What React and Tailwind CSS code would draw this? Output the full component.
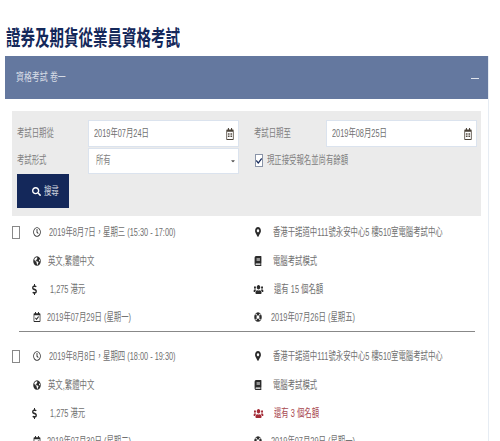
import { FaRegClock, FaGlobeAmericas, FaDollarSign, FaRegCalendarCheck, FaMapMarkerAlt, FaBook, FaUsers, FaLifeRing, FaSearch, FaRegCalendarAlt, FaCheck, FaCaretDown } from 'react-icons/fa';

const font = { fontFamily: '"Liberation Sans", "Noto Sans CJK TC", sans-serif' };

const sessions = [
  {
    date: '2019年8月7日，星期三 (15:30 - 17:00)',
    place: '香港干諾道中111號永安中心5 樓510室電腦考試中心',
    seats: '還有 15 個名額',
    low: false,
    closeDate: '2019年07月29日 (星期一)',
    resultDate: '2019年07月26日 (星期五)',
  },
  {
    date: '2019年8月8日，星期四 (18:00 - 19:30)',
    place: '香港干諾道中111號永安中心5 樓510室電腦考試中心',
    seats: '還有 3 個名額',
    low: true,
    closeDate: '2019年07月30日 (星期二)',
    resultDate: '2019年07月29日 (星期一)',
  },
];

// the reference is squeezed horizontally, so text is narrowed the same way
function Narrow({ children, className = '' }) {
  return <span className={`inline-block origin-left scale-x-[0.67] whitespace-nowrap ${className}`}>{children}</span>;
}

function Cell({ icon, children, gap = 'ml-[5px]', iconColor = 'text-[#2b2b2b]', className = '', first }) {
  return (
    <div className={`flex items-center ${first ? 'h-[30px]' : 'h-[28px]'} text-[11px] text-[#707070] ${className}`}>
      <span className={`w-[8px] flex justify-center shrink-0 ${iconColor}`}>{icon}</span>
      <span className={gap}>
        <Narrow>{children}</Narrow>
      </span>
    </div>
  );
}

function Session({ s, index, last }) {
  const icon = 'scale-x-[0.78] shrink-0';
  return (
    <div className={`ml-[7px] mr-[6px] ${index === 0 ? 'pt-[1px]' : 'pt-[9px]'} ${last ? '' : 'border-b border-[#888]'}`}>
      <div className="grid grid-cols-[235px_1fr]">
        <div>
          <div className="flex items-center h-[30px] -ml-[7px]">
            <span className="w-[8px] h-[13px] border border-[#888] bg-white shrink-0" />
            <span className="ml-[13px]">
              <Cell first gap="ml-[8px]" icon={<FaRegClock size={10} className={icon} />}>{s.date}</Cell>
            </span>
          </div>
          <Cell gap="ml-[7px]" icon={<FaGlobeAmericas size={10} className={icon} />} className="pl-[14px]">英文,繁體中文</Cell>
          <Cell gap="ml-[12px]" icon={<FaDollarSign size={11} className={icon} />} className="pl-[11px]">1,275 港元</Cell>
          <Cell gap="ml-[6px]" icon={<FaRegCalendarCheck size={10} className={icon} />} className="pl-[14px]">{s.closeDate}</Cell>
        </div>
        <div>
          <Cell first gap="ml-[11px]" icon={<FaMapMarkerAlt size={10} className={icon} />}>{s.place}</Cell>
          <Cell gap="ml-[11px]" icon={<FaBook size={10} className={icon} />}>電腦考試模式</Cell>
          <Cell
            gap="ml-[12px]"
            icon={<FaUsers size={13} className={icon} />}
            iconColor={s.low ? 'text-[#a32a35]' : 'text-[#2b2b2b]'}
            className={s.low ? 'text-[#a8484f]' : ''}
          >
            {s.seats}
          </Cell>
          <Cell gap="ml-[9px]" icon={<FaLifeRing size={10} className={icon} />}>{s.resultDate}</Cell>
        </div>
      </div>
    </div>
  );
}

function DateInput({ value }) {
  return (
    <div className="w-[151px] h-[27px] bg-white border border-[#dbe3ee] flex items-center justify-between pl-[5px] pr-[2px] text-[11px] text-[#707070]">
      <Narrow>{value}</Narrow>
      <FaRegCalendarAlt size={12} className="text-[#4a4238] scale-x-[0.7]" />
    </div>
  );
}

export default function App() {
  return (
    <div className="w-[500px] h-[441px] overflow-hidden bg-white" style={font}>
      <h1 className="pl-[6px] pt-[25px] h-[56px] text-[21px] leading-[26px] font-bold text-[#14285a]">
        <span className="inline-block origin-left scale-x-[0.69] whitespace-nowrap">證券及期貨從業員資格考試</span>
      </h1>
      <div className="ml-[5px] w-[484px] border-r border-[#e6ecf3]">
        <div className="h-[43px] bg-[#64789f] flex items-center justify-between pl-[11px] pr-[9px] text-white/75 text-[11px]">
          <span className="inline-block origin-left scale-x-[0.72] whitespace-nowrap">資格考試 卷一</span>
          <span className="w-[8px] h-[1px] bg-white/80 mt-[1px]" />
        </div>
        <div className="pl-[7px] pr-[7px] pt-[12px]">
          <div className="h-[105px] bg-[#ebebeb] pl-[5px] pt-[9px] text-[11px] text-[#808080]">
            <div className="flex items-center h-[27px]">
              <span className="w-[71px]"><Narrow>考試日期從</Narrow></span>
              <DateInput value="2019年07月24日" />
              <span className="w-[72px] ml-[15px]"><Narrow>考試日期至</Narrow></span>
              <DateInput value="2019年08月25日" />
            </div>
            <div className="flex items-center h-[27px]">
              <span className="w-[71px]"><Narrow>考試形式</Narrow></span>
              <div className="w-[151px] h-[26px] bg-white border border-[#dbe3ee] flex items-center justify-between pl-[7px] pr-[2px] text-[#808080]">
                <Narrow>所有</Narrow>
                <FaCaretDown size={6} className="text-[#555]" />
              </div>
              <span className="ml-[16px] w-[8px] h-[13px] bg-white border border-[#8a94a8] flex items-center justify-center shrink-0">
                <FaCheck size={8} className="text-[#14285a] scale-x-[0.75] shrink-0" />
              </span>
              <span className="ml-[4px]"><Narrow>現正接受報名並尚有餘額</Narrow></span>
            </div>
            <button className="w-[52px] h-[34px] bg-[#14285a] text-white/80 flex items-center justify-center pl-[4px] text-[11px]">
              <FaSearch size={9} className="text-white shrink-0" />
              <span className="ml-[3px] w-[15px] text-left"><Narrow>搜尋</Narrow></span>
            </button>
          </div>
          <div>
            {sessions.map((s, i) => (
              <Session key={s.date} s={s} index={i} last={i === sessions.length - 1} />
            ))}
          </div>
        </div>
      </div>
    </div>
  );
}
